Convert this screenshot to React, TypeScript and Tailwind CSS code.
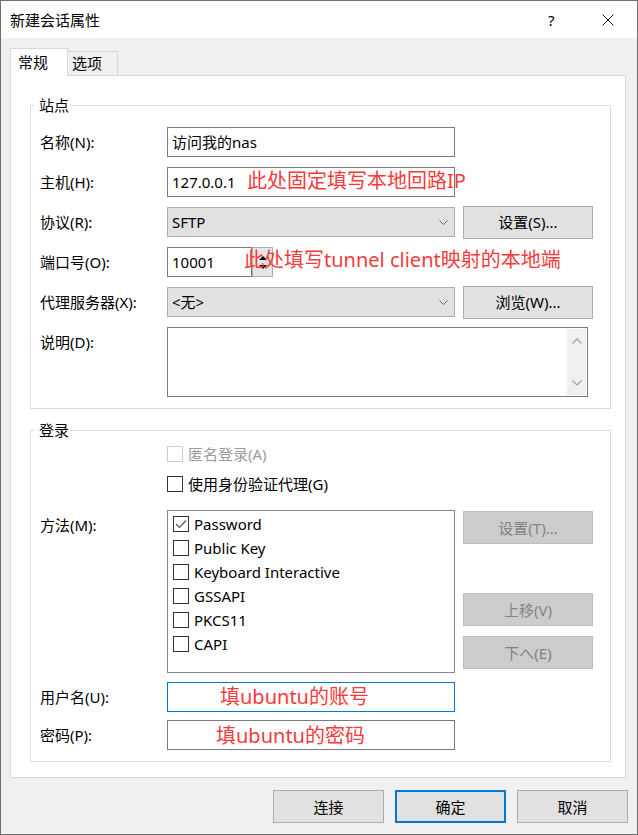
import React from "react";

const Chevron = ({ color = "#5f5f5f" }: { color?: string }) => (
  <svg width="9" height="5" viewBox="0 0 9 5">
    <path d="M0.5 0.5 L4.5 4.5 L8.5 0.5" fill="none" stroke={color} strokeWidth="1" />
  </svg>
);

const Box = ({ checked, disabled }: { checked?: boolean; disabled?: boolean }) => (
  <span
    className={`w-[16px] h-[16px] shrink-0 border bg-white flex items-center justify-center ${
      disabled ? "border-[#cccccc]" : "border-[#333333]"
    }`}
  >
    {checked && (
      <svg width="12" height="10" viewBox="0 0 12 10">
        <path d="M1 5 L4.5 8.5 L11 1.5" fill="none" stroke="#555555" strokeWidth="1.2" />
      </svg>
    )}
  </span>
);

const Btn = ({ label, disabled, primary, className = "" }: { label: string; disabled?: boolean; primary?: boolean; className?: string }) => (
  <div
    className={`flex items-center justify-center leading-[20px] ${
      disabled
        ? "bg-[#cccccc] border border-[#bfbfbf] text-[#838383]"
        : primary
        ? "bg-[#e1e1e1] border-2 border-[#0078d7]"
        : "bg-[#e1e1e1] border border-[#adadad]"
    } ${className}`}
  >
    {label}
  </div>
);

const Note = ({ text, className }: { text: string; className: string }) => (
  <span className={`absolute top-1/2 -translate-y-1/2 whitespace-nowrap text-[20px] leading-[24px] text-[#f53b3b] ${className}`}>
    {text}
  </span>
);

const methods = ["Password", "Public Key", "Keyboard Interactive", "GSSAPI", "PKCS11", "CAPI"];

export default function App() {
  return (
    <div className="w-[638px] h-[835px] border border-[#6f6f6f] bg-[#f0f0f0] flex flex-col text-[15px] leading-[20px] text-black font-['Noto_Sans','Noto_Sans_CJK_SC',sans-serif]">
      {/* title bar */}
      <div className="h-[37px] shrink-0 bg-white flex items-center pl-[9px] pr-[23px]">
        <span>新建会话属性</span>
        <span className="ml-auto w-[8px]">?</span>
        <svg className="ml-[46px]" width="12" height="12" viewBox="0 0 12 12">
          <path d="M0.5 0.5 L11.5 11.5 M11.5 0.5 L0.5 11.5" stroke="#111" strokeWidth="1" />
        </svg>
      </div>

      <div className="flex-1 px-[9px] pt-[10px]">
        {/* tabs */}
        <div className="flex items-end h-[27px]">
          <div className="relative z-10 -mb-[1px] w-[58px] h-[28px] bg-white border-t border-l border-r border-[#d9d9d9] pl-[7px] pt-[3px]">
            常规
          </div>
          <div className="w-[50px] h-[24px] border-t border-r border-[#d9d9d9] pl-[4px] pt-[1px]">选项</div>
        </div>

        {/* panel */}
        <div className="w-[616px] h-[703px] bg-white border border-[#d9d9d9] pt-[19px] pl-[19px]">
          <fieldset className="w-[581px] border border-[#dcdcdc] pl-[9px] pb-[11px]">
            <legend className="-ml-[6px] pl-[5px] pr-[1px] leading-[20px]">站点</legend>
            <div className="pt-[12px] flex flex-col gap-[10px]">
              <div className="flex items-center h-[30px]">
                <span className="w-[127px]">名称(N):</span>
                <div className="w-[288px] h-[30px] border border-[#7a7a7a] flex items-center pl-[4px]">访问我的nas</div>
              </div>

              <div className="relative flex items-center h-[30px]">
                <span className="w-[127px]">主机(H):</span>
                <div className="relative w-[288px] h-[30px] border border-[#7a7a7a] flex items-center pl-[4px]">
                  127.0.0.1
                  <Note text="此处固定填写本地回路IP" className="left-[79px] -mt-[1px]" />
                </div>
              </div>

              <div className="flex items-center h-[30px]">
                <span className="w-[127px]">协议(R):</span>
                <div className="w-[288px] h-[30px] bg-[#e1e1e1] border border-[#adadad] flex items-center pl-[4px] pr-[6px]">
                  <span>SFTP</span>
                  <span className="ml-auto">
                    <Chevron />
                  </span>
                </div>
                <Btn label="设置(S)..." className="ml-[8px] w-[130px] h-[33px]" />
              </div>

              <div className="flex items-center h-[30px]">
                <span className="w-[127px]">端口号(O):</span>
                <div className="relative flex">
                  <div className="w-[85px] h-[30px] border border-[#7a7a7a] flex items-center pl-[4px]">10001</div>
                  <div className="w-[21px] h-[30px] border border-[#adadad] bg-[#e6e6e6] flex flex-col items-center justify-center gap-[5px]">
                    <svg width="8" height="4" viewBox="0 0 8 4">
                      <path d="M0 4 L4 0 L8 4 Z" fill="#000" />
                    </svg>
                    <svg width="8" height="4" viewBox="0 0 8 4">
                      <path d="M0 0 L8 0 L4 4 Z" fill="#000" />
                    </svg>
                  </div>
                  <Note text="此处填写tunnel client映射的本地端" className="left-[77px] -mt-[2px]" />
                </div>
              </div>

              <div className="flex items-center h-[30px]">
                <span className="w-[127px]">代理服务器(X):</span>
                <div className="w-[288px] h-[30px] bg-[#e1e1e1] border border-[#adadad] flex items-center pl-[4px] pr-[6px]">
                  <span>&lt;无&gt;</span>
                  <span className="ml-auto">
                    <Chevron />
                  </span>
                </div>
                <Btn label="浏览(W)..." className="ml-[8px] w-[130px] h-[33px]" />
              </div>

              <div className="flex items-start">
                <span className="w-[127px] mt-[5px]">说明(D):</span>
                <div className="w-[421px] h-[70px] border border-[#7a7a7a] flex justify-end p-[1px]">
                  <div className="w-[19px] h-full bg-[#f0f0f0] flex flex-col items-center justify-between py-[9px]">
                    <svg width="10" height="6" viewBox="0 0 10 6">
                      <path d="M0.5 5.5 L5 1 L9.5 5.5" fill="none" stroke="#a6a6a6" strokeWidth="1.3" />
                    </svg>
                    <svg width="10" height="6" viewBox="0 0 10 6">
                      <path d="M0.5 0.5 L5 5 L9.5 0.5" fill="none" stroke="#a6a6a6" strokeWidth="1.3" />
                    </svg>
                  </div>
                </div>
              </div>
            </div>
          </fieldset>

          <fieldset className="mt-[11px] w-[581px] border border-[#dcdcdc] pl-[9px] pb-[11px]">
            <legend className="-ml-[6px] pl-[5px] pr-[1px] leading-[20px]">登录</legend>
            <div className="pt-[6px] flex flex-col">
              <div className="flex items-center h-[16px] pl-[127px] gap-[5px]">
                <Box disabled />
                <span className="text-[#9b9b9b]">匿名登录(A)</span>
              </div>
              <div className="mt-[14px] flex items-center h-[16px] pl-[127px] gap-[5px]">
                <Box />
                <span>使用身份验证代理(G)</span>
              </div>

              <div className="mt-[18px] flex items-start">
                <span className="w-[127px] mt-[5px]">方法(M):</span>
                <div className="w-[288px] h-[163px] border border-[#828790] pt-[1px] pl-[5px]">
                  {methods.map((m, i) => (
                    <div key={m} className="h-[24px] flex items-center gap-[5px]">
                      <Box checked={i === 0} />
                      <span>{m}</span>
                    </div>
                  ))}
                </div>
                <div className="ml-[8px] flex flex-col">
                  <Btn label="设置(T)..." disabled className="mt-[1px] w-[130px] h-[33px]" />
                  <Btn label="上移(V)" disabled className="mt-[49px] w-[130px] h-[33px]" />
                  <Btn label="下へ(E)" disabled className="mt-[10px] w-[130px] h-[33px]" />
                </div>
              </div>

              <div className="mt-[9px] flex items-center h-[30px]">
                <span className="w-[127px]">用户名(U):</span>
                <div className="relative w-[288px] h-[30px] border border-[#0078d7]">
                  <Note text="填ubuntu的账号" className="left-[52px]" />
                </div>
              </div>
              <div className="mt-[8px] flex items-center h-[30px]">
                <span className="w-[127px]">密码(P):</span>
                <div className="relative w-[288px] h-[30px] border border-[#7a7a7a]">
                  <Note text="填ubuntu的密码" className="left-[48px] mt-[1px]" />
                </div>
              </div>
            </div>
          </fieldset>
        </div>

        {/* dialog buttons */}
        <div className="mt-[12px] flex justify-end gap-[11px]">
          <Btn label="连接" className="w-[111px] h-[33px]" />
          <Btn label="确定" primary className="w-[111px] h-[33px]" />
          <Btn label="取消" className="w-[111px] h-[33px]" />
        </div>
      </div>
    </div>
  );
}
